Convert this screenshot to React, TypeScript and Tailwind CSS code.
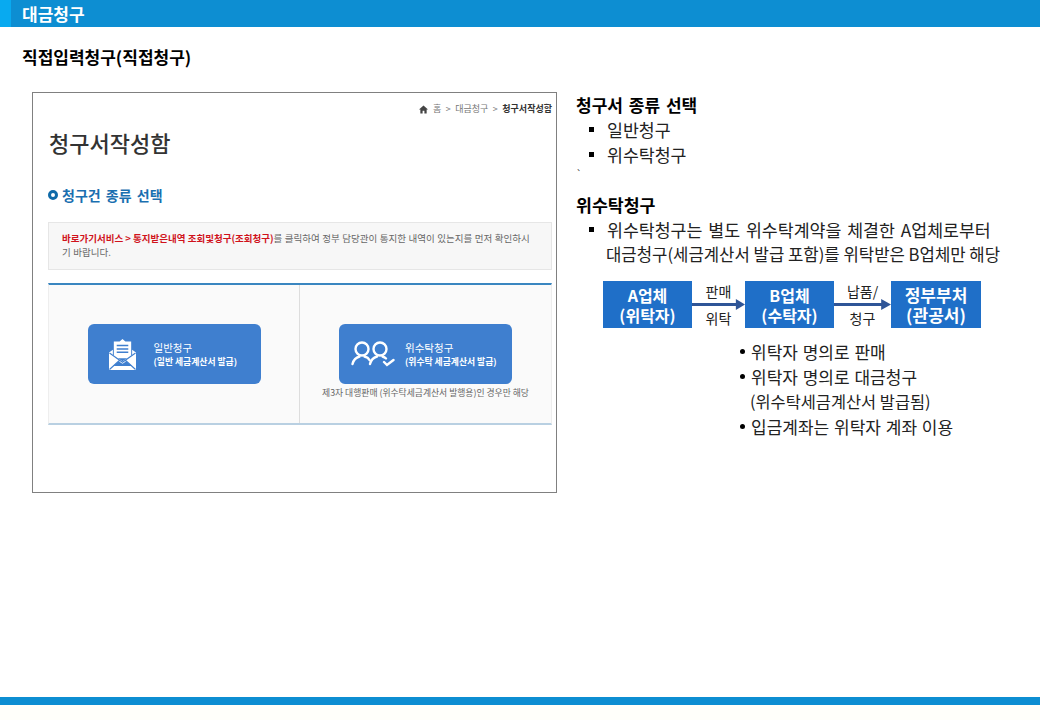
const font = "font-['Noto_Sans_CJK_KR','Liberation_Sans',sans-serif]";

const Bullet = ({ children }: { children: React.ReactNode }) => (
    <div className="flex h-[25px] items-center text-[17.300px] text-[#222] pl-[13px] whitespace-nowrap">
        <span className="w-[5px] h-[5px] bg-black mr-[12px] shrink-0" />
        <span className="ml-[1px] [word-spacing:2px]">{children}</span>
    </div>
);

const FlowBox = ({ top, bottom }: { top: string; bottom: string }) => (
    <div className="w-[89px] h-[47px] bg-[#1f6fc8] text-white text-[16px] leading-[20px] font-bold flex items-center justify-center text-center shrink-0">
        <div>
            {top}
            <br />
            {bottom}
        </div>
    </div>
);

const FlowArrow = ({ top, bottom, width }: { top: string; bottom: string; width: string }) => (
    <div className={`${width} h-[47px] flex flex-col items-center justify-between relative shrink-0 text-[14px] leading-[20px] text-[#222]`}>
        <span>{top}</span>
        <span>{bottom}</span>
        <svg className="absolute left-0 top-[17px]" width="100%" height="13" viewBox="0 0 58 13" preserveAspectRatio="none">
            <path d="M0 5h48V1l10 5.500-10 5.500V8H0z" fill="#2f5597" />
        </svg>
    </div>
);

const Dot = ({ children }: { children: React.ReactNode }) => (
    <div className="flex items-center">
        <span className="w-[5px] h-[5px] rounded-full bg-black mr-[6px] shrink-0" />
        <span className="[word-spacing:1px]">{children}</span>
    </div>
);

const MailIcon = () => (
    <svg width="27" height="31" viewBox="0 0 28 32">
        <path d="M14 0l3 2.500h6V20H5V2.500h6z" fill="white" />
        <path d="M8 6h12v1.500H8zM8 9.500h12V11H8zM8 13h12v1.500H8z" fill="#3f7fcf" />
        <path d="M0 14l4-3v17h20V11l4 3v18H0z" fill="white" />
        <path d="M1 14.500L14 23l13-8.500V31l-9-8-4 2.500-4-2.500-9 8z" fill="white" />
        <path d="M.5 14.500L14 24l13.500-9.500M.5 31.500L11 22M27.500 31.500L17 22" fill="none" stroke="#3f7fcf" strokeWidth="1.200" />
    </svg>
);

const PeopleIcon = () => (
    <svg width="44" height="26" viewBox="0 0 44 26" fill="none" stroke="white" strokeWidth="2.400" strokeLinecap="round">
        <circle cx="11" cy="8" r="6.500" />
        <circle cx="29" cy="8" r="6.500" />
        <path d="M1.500 23c1-4 3.500-6.500 7-7.500M13.500 15.500c2 .5 4 1.500 5 3.500" />
        <path d="M19 23c1-4 3.500-6.500 7-7.500M31.500 15.500c1.500.5 2.500 1 3.500 2" />
        <path d="M33 21l3 3 6.500-5" />
    </svg>
);

export default function App() {
    return (
        <div className={`${font} w-[1040px] h-[720px] flex flex-col bg-white overflow-hidden`}>
            <div className="h-[27px] bg-[#0d8ed2] flex items-start shrink-0">
                <div className="w-[11px] h-full bg-[#08aaf0]" />
                <span className="ml-[11px] mt-[5px] text-white text-[17px] font-bold leading-[18px]">대금청구</span>
            </div>

            <div className="h-[65px] pl-[22px] pt-[18px] text-[17px] leading-[24px] font-bold text-black shrink-0">
                직접입력청구(직접청구)
            </div>

            <div className="flex flex-1 pl-[32px]">
                <div className="w-[525px] h-[401px] border border-[#808080] flex flex-col shrink-0 pl-[15px] pr-[4px]">
                    <div className="h-[22px] flex items-end justify-end gap-[4.500px] text-[9px] leading-[12px] text-[#777] [word-spacing:1px]">
                        <svg width="9" height="9" viewBox="0 0 10 10" className="mb-[1px]" fill="#444">
                            <path d="M5 .5L0 5h1.500v4.500h2.500v-3h2v3h2.500V5H10z" />
                        </svg>
                        <span>홈</span>
                        <span>&gt;</span>
                        <span>대금청구</span>
                        <span>&gt;</span>
                        <span className="font-bold text-[#333]">청구서작성함</span>
                    </div>
                    <div className="mt-[11px] ml-[1px] h-[32px] text-[22px] leading-[32px] font-medium text-[#333]">청구서작성함</div>
                    <div className="mt-[25px] h-[24px] flex items-center gap-[4px] text-[#1a6fb0] text-[14px] font-bold [word-spacing:2px]">
                        <span className="w-[10px] h-[10px] rounded-full border-[3px] border-[#0f6aa8]" />
                        <span>청구건 종류 선택</span>
                    </div>
                    <div className="mt-[15px] h-[48px] bg-[#f7f7f7] border border-[#e6e6e6] px-[13px] pt-[8px] text-[9.500px] leading-[14px] text-[#666] [word-spacing:0.400px]">
                        <span className="font-bold text-[#d0121b] [word-spacing:0]">바로가기서비스 &gt; 통지받은내역 조회및청구(조회청구)</span>
                        를 클릭하여 정부 담당관이 통지한 내역이 있는지를 먼저 확인하시
                        <br />
                        기 바랍니다.
                    </div>
                    <div className="mt-[13px] h-[142px] flex bg-[#fafafa] border-t-2 border-t-[#3a86c0] border-b-2 border-b-[#b9d0e2] border-x border-x-[#eeeeee]">
                        <div className="w-[251px] border-r border-r-[#dddddd] flex justify-center pt-[39px]">
                            <div className="w-[173px] h-[60px] bg-[#3f7fcf] rounded-[6px] flex items-center pl-[21px] gap-[18px] text-white">
                                <MailIcon />
                                <div className="flex flex-col">
                                    <span className="text-[10.500px] leading-[15px]">일반청구</span>
                                    <span className="text-[8.800px] leading-[14px] font-bold">(일반 세금계산서 발급)</span>
                                </div>
                            </div>
                        </div>
                        <div className="flex-1 flex flex-col items-center pt-[39px]">
                            <div className="w-[173px] h-[60px] bg-[#3f7fcf] rounded-[6px] flex items-center pl-[12px] gap-[10px] text-white">
                                <PeopleIcon />
                                <div className="flex flex-col">
                                    <span className="text-[10.500px] leading-[15px]">위수탁청구</span>
                                    <span className="text-[8.800px] leading-[14px] font-bold whitespace-nowrap">(위수탁 세금계산서 발급)</span>
                                </div>
                            </div>
                            <div className="mt-[3px] text-[8.800px] leading-[12px] text-[#666] whitespace-nowrap">
                                제3자 대행판매 (위수탁세금계산서 발행용)인 경우만 해당
                            </div>
                        </div>
                    </div>
                </div>

                <div className="ml-[19px] flex-1 text-[#222]">
                    <div className="h-[25px] text-[17px] leading-[25px] font-bold text-black [word-spacing:2px]">청구서 종류 선택</div>
                    <Bullet>일반청구</Bullet>
                    <Bullet>위수탁청구</Bullet>
                    <div className="h-[25px] text-[10px] leading-[14px] text-[#444]">`</div>
                    <div className="h-[25px] text-[17.300px] leading-[25px] font-bold text-black">위수탁청구</div>
                    <Bullet>위수탁청구는 별도 위수탁계약을 체결한 A업체로부터</Bullet>
                    <div className="h-[25px] pl-[30px] text-[16.700px] leading-[25px] whitespace-nowrap">
                        대금청구(세금계산서 발급 포함)를 위탁받은 B업체만 해당
                    </div>

                    <div className="mt-[14px] ml-[27px] flex">
                        <FlowBox top="A업체" bottom="(위탁자)" />
                        <FlowArrow top="판매" bottom="위탁" width="w-[53px]" />
                        <FlowBox top="B업체" bottom="(수탁자)" />
                        <FlowArrow top="납품/" bottom="청구" width="w-[57px]" />
                        <div className="w-[90px] h-[47px] bg-[#1f6fc8] text-white text-[17px] leading-[20px] font-bold flex items-center justify-center text-center">
                            <div>
                                정부부처
                                <br />
                                (관공서)
                            </div>
                        </div>
                    </div>

                    <div className="mt-[11px] ml-[164px] text-[17px] leading-[25px] text-[#222] whitespace-nowrap">
                        <Dot>위탁자 명의로 판매</Dot>
                        <Dot>위탁자 명의로 대금청구</Dot>
                        <div className="pl-[10px] text-[16.400px]">(위수탁세금계산서 발급됨)</div>
                        <Dot>입금계좌는 위탁자 계좌 이용</Dot>
                    </div>
                </div>
            </div>

            <div className="h-[8px] bg-[#0d8ed2] shrink-0" />
            <div className="h-[15px] bg-[#fffffa] shrink-0" />
        </div>
    );
}
